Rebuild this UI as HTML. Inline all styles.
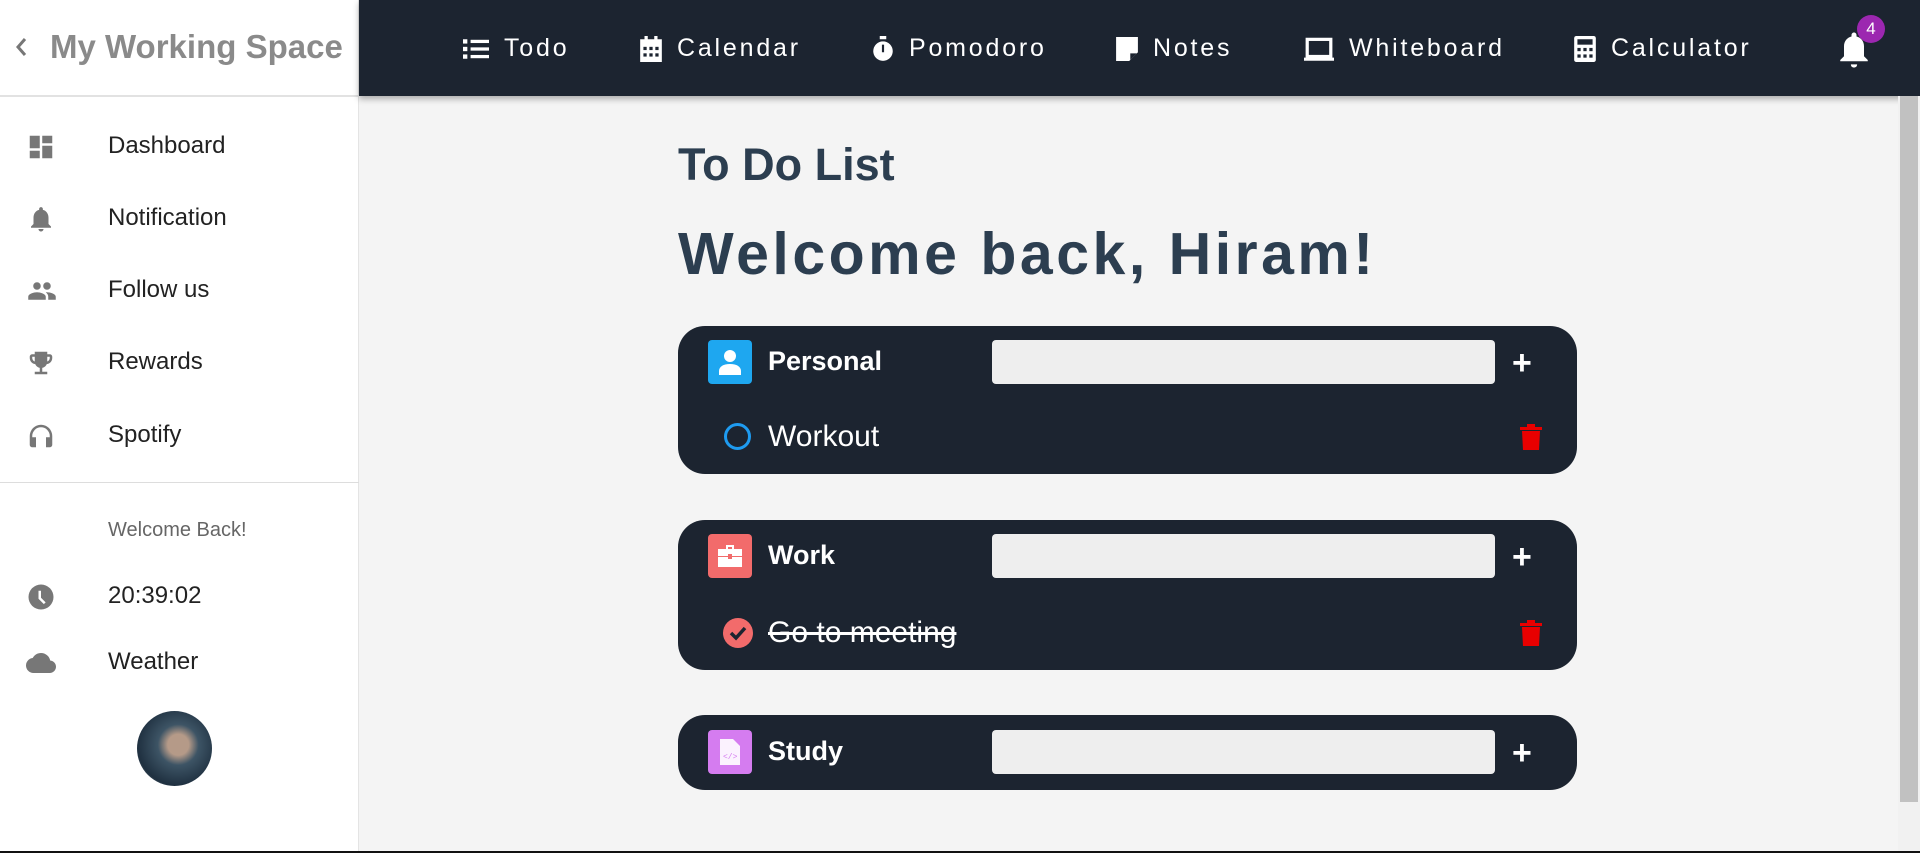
<!DOCTYPE html>
<html><head><meta charset="utf-8"><style>
*{margin:0;padding:0;box-sizing:border-box}
body{width:1920px;height:853px;overflow:hidden;background:#f4f4f4;font-family:"Liberation Sans",sans-serif;position:relative}
.side{position:absolute;left:0;top:0;width:359px;height:853px;background:#fff;border-right:1px solid #e4e4e4}
.sh{height:97px;border-bottom:2px solid #e2e2e2;position:relative}
.sh .t{position:absolute;left:50px;top:28px;font-size:33px;font-weight:bold;color:#8a8a8a}
.sh .c{position:absolute;left:14px;top:36px}
.it{position:absolute;left:0;width:359px;height:40px}
.it svg{position:absolute;left:26px;top:6px}
.it span{position:absolute;left:108px;top:6px;font-size:24px;color:#222}
.top{position:absolute;left:359px;top:0;width:1561px;height:96px;background:#1c2430;box-shadow:0 3px 6px rgba(0,0,0,.3)}
.nav{position:absolute;top:34px;color:#fff;font-size:25px;letter-spacing:2.8px;display:flex;align-items:center}
.nav svg{margin-right:15px}
h1{position:absolute;left:678px;top:139px;font-size:45px;color:#2c3e50;font-weight:bold}
h2{position:absolute;left:678px;top:220px;font-size:59px;color:#2c3e50;font-weight:900;letter-spacing:3.5px}
.card{position:absolute;left:678px;width:899px;background:#1c2430;border-radius:27px}
.ic{position:absolute;left:30px;width:44px;height:44px;border-radius:4px;display:flex;align-items:center;justify-content:center}
.lb{position:absolute;left:90px;font-size:27px;font-weight:bold;color:#fff}
.in{position:absolute;left:314px;width:503px;height:44px;background:#eeeeee;border-radius:4px}
.pl{position:absolute;left:834px;color:#fff;font-size:34px;font-weight:bold}
.row{position:absolute;left:90px;font-size:30px;color:#fff}
.scroll{position:absolute;left:1898px;top:96px;width:22px;height:757px;background:#f1f1f1}
.scroll div{position:absolute;left:2px;top:0;width:18px;height:706px;background:#c1c1c1}
</style></head><body>
<div class="side">
 <div class="sh"><svg class="c" width="14" height="22" viewBox="0 0 14 22"><path d="M11 3L4 11l7 8" stroke="#777" stroke-width="3" fill="none"/></svg><div class="t">My Working Space</div></div>
 <div class="it" style="top:126px"><svg width="30" height="30" viewBox="0 0 24 24" fill="#777"><path d="M3 13h8V3H3zm0 8h8v-6H3zm10 0h8V11h-8zm0-18v6h8V3z"/></svg><span>Dashboard</span></div>
 <div class="it" style="top:198px"><svg width="30" height="30" viewBox="0 0 24 24" fill="#777"><path d="M12 22c1.1 0 2-.9 2-2h-4c0 1.1.9 2 2 2zm6-6v-5c0-3.07-1.640-5.64-4.5-6.32V4c0-.83-.67-1.5-1.5-1.5s-1.5.67-1.5 1.5v.68C7.63 5.36 6 7.920 6 11v5l-2 2v1h16v-1z"/></svg><span>Notification</span></div>
 <div class="it" style="top:270px"><svg width="32" height="30" viewBox="0 0 24 24" fill="#777"><path d="M16 11c1.66 0 2.99-1.34 2.99-3S17.66 5 16 5s-3 1.34-3 3 1.34 3 3 3zm-8 0c1.66 0 2.99-1.34 2.99-3S9.66 5 8 5 5 6.34 5 8s1.34 3 3 3zm0 2c-2.33 0-7 1.17-7 3.5V19h14v-2.5C15 14.17 10.33 13 8 13zm8 0c-.29 0-.62.02-.97.05 1.16.84 1.97 1.97 1.97 3.45V19h6v-2.5c0-2.33-4.67-3.5-7-3.5z"/></svg><span>Follow us</span></div>
 <div class="it" style="top:342px"><svg width="30" height="30" viewBox="0 0 24 24" fill="#777"><path d="M19 5h-2V3H7v2H5c-1.1 0-2 .9-2 2v1c0 2.55 1.92 4.63 4.39 4.94A5.01 5.01 0 0011 15.9V19H7v2h10v-2h-4v-3.1a5.01 5.01 0 003.61-2.96C19.08 12.63 21 10.55 21 8V7c0-1.1-.9-2-2-2zM5 8V7h2v3.82C5.84 10.4 5 9.3 5 8zm14 0c0 1.3-.84 2.4-2 2.82V7h2z"/></svg><span>Rewards</span></div>
 <div class="it" style="top:415px"><svg width="30" height="30" viewBox="0 0 24 24" fill="#777"><path d="M12 3a9 9 0 00-9 9v7c0 1.1.9 2 2 2h3v-8H5v-1a7 7 0 0114 0v1h-3v8h3c1.1 0 2-.9 2-2v-7a9 9 0 00-9-9z"/></svg><span>Spotify</span></div>
 <div style="position:absolute;left:0;top:482px;width:359px;height:1px;background:#ddd"></div>
 <div style="position:absolute;left:108px;top:519px;font-size:20px;color:#666">Welcome Back!</div>
 <div class="it" style="top:576px"><svg width="30" height="30" viewBox="0 0 24 24" fill="#777"><circle cx="12" cy="12" r="10"/><path d="M11 7v6l4 4" stroke="#fff" stroke-width="2" fill="none"/></svg><span>20:39:02</span></div>
 <div class="it" style="top:642px"><svg width="38" height="30" viewBox="0 0 24 24" fill="#777" style="left:22px"><path d="M19.35 10.04A7.49 7.49 0 0012 4C9.11 4 6.6 5.64 5.35 8.04A5.994 5.994 0 000 14c0 3.31 2.69 6 6 6h13c2.76 0 5-2.24 5-5 0-2.64-2.05-4.78-4.65-4.96z"/></svg><span>Weather</span></div>
 <div style="position:absolute;left:137px;top:711px;width:75px;height:75px;border-radius:50%;background:radial-gradient(circle at 55% 45%,#b59a88 0 18%,#3d5465 35%,#1f3040 70%,#90a4ae 100%)"></div>
</div>
<div class="top">
 <div class="nav" style="left:104px"><svg width="26" height="24" viewBox="0 0 24 22" fill="#fff"><rect x="0" y="2" width="4" height="4"/><rect x="0" y="9" width="4" height="4"/><rect x="0" y="16" width="4" height="4"/><rect x="7" y="2.5" width="17" height="3"/><rect x="7" y="9.5" width="17" height="3"/><rect x="7" y="16.5" width="17" height="3"/></svg>Todo</div>
 <div class="nav" style="left:281px"><svg width="22" height="26" viewBox="0 0 20 24" fill="#fff"><rect x="4" y="0" width="3" height="4"/><rect x="13" y="0" width="3" height="4"/><path d="M0 3h20v21H0z"/><g fill="#1c2430"><rect x="3" y="10" width="3" height="3"/><rect x="8.5" y="10" width="3" height="3"/><rect x="14" y="10" width="3" height="3"/><rect x="3" y="16" width="3" height="3"/><rect x="8.5" y="16" width="3" height="3"/><rect x="14" y="16" width="3" height="3"/></g></svg>Calendar</div>
 <div class="nav" style="left:513px"><svg width="22" height="26" viewBox="0 0 20 24" fill="#fff"><rect x="7" y="0" width="6" height="3"/><circle cx="10" cy="14" r="9"/><rect x="9" y="8" width="2" height="7" fill="#1c2430"/></svg>Pomodoro</div>
 <div class="nav" style="left:757px"><svg width="22" height="24" viewBox="0 0 20 22" fill="#fff"><path d="M0 0h20v14l-8 8H0z"/><path d="M13 21v-6h6z" fill="#1c2430"/></svg>Notes</div>
 <div class="nav" style="left:945px"><svg width="30" height="24" viewBox="0 0 28 22" fill="none" stroke="#fff" stroke-width="3"><rect x="3" y="2" width="22" height="16"/><path d="M0 20.5h28"/></svg>Whiteboard</div>
 <div class="nav" style="left:1215px"><svg width="22" height="26" viewBox="0 0 20 24" fill="#fff"><rect width="20" height="24" rx="2"/><rect x="3" y="3" width="14" height="5" fill="#1c2430"/><g fill="#1c2430"><rect x="3" y="11" width="3" height="3"/><rect x="8.5" y="11" width="3" height="3"/><rect x="14" y="11" width="3" height="3"/><rect x="3" y="17" width="3" height="3"/><rect x="8.5" y="17" width="3" height="3"/><rect x="14" y="17" width="3" height="3"/></g></svg>Calculator</div>
 <svg style="position:absolute;left:1480px;top:32px" width="30" height="36" viewBox="0 0 24 28" fill="#fff"><path d="M12 28c1.6 0 2.5-1 2.5-2.5h-5C9.5 27 10.4 28 12 28zM20 19v-8c0-4-2.5-7-6-7.8V2a2 2 0 00-4 0v1.2C6.5 4 4 7 4 11v8l-3 3v1h22v-1z"/></svg>
 <div style="position:absolute;left:1498px;top:15px;width:28px;height:28px;border-radius:50%;background:#9c27b0;color:#fff;font-size:17px;text-align:center;line-height:28px">4</div>
</div>
<div class="scroll"><div></div></div>
<h1>To Do List</h1>
<h2>Welcome back, Hiram!</h2>

<div class="card" style="top:326px;height:148px">
 <div class="ic" style="top:14px;background:#1ea7f0"><svg width="22" height="26" viewBox="0 0 22 26" fill="#fff"><circle cx="11" cy="7" r="6"/><path d="M0 26v-4c0-4 4-7 11-7s11 3 11 7v4z"/></svg></div>
 <div class="lb" style="top:20px">Personal</div>
 <div class="in" style="top:14px"></div>
 <div class="pl" style="top:18px">+</div>
 <div style="position:absolute;left:46px;top:97px;width:27px;height:27px;border-radius:50%;border:3px solid #1e9bf0"></div>
 <div class="row" style="top:94px">Workout</div>
 <svg style="position:absolute;left:842px;top:98px" width="22" height="26" viewBox="0 0 22 26" fill="#e80000"><rect x="0" y="3" width="22" height="3"/><rect x="7" y="0" width="8" height="3"/><path d="M2 7h18l-1 19H3z"/></svg>
</div>

<div class="card" style="top:520px;height:150px">
 <div class="ic" style="top:14px;background:#f26b6b"><svg width="24" height="22" viewBox="0 0 24 22" fill="#fff"><path d="M8 0h8v4h-2V2h-4v2H8z"/><rect y="4" width="24" height="7"/><rect y="12" width="24" height="10"/><rect x="10" y="9" width="4" height="5" fill="#f26b6b"/></svg></div>
 <div class="lb" style="top:20px">Work</div>
 <div class="in" style="top:14px"></div>
 <div class="pl" style="top:18px">+</div>
 <svg style="position:absolute;left:45px;top:98px" width="30" height="30" viewBox="0 0 30 30"><circle cx="15" cy="15" r="15" fill="#f26b6b"/><path d="M8 15l5 5 9-10" stroke="#1c2430" stroke-width="3.5" fill="none"/></svg>
 <div class="row" style="top:96px;text-decoration:line-through">Go to meeting</div>
 <svg style="position:absolute;left:842px;top:100px" width="22" height="26" viewBox="0 0 22 26" fill="#e80000"><rect x="0" y="3" width="22" height="3"/><rect x="7" y="0" width="8" height="3"/><path d="M2 7h18l-1 19H3z"/></svg>
</div>

<div class="card" style="top:715px;height:75px">
 <div class="ic" style="top:15px;background:#d57cf0"><svg width="20" height="26" viewBox="0 0 20 26"><path d="M0 0h13l7 7v19H0z" fill="#fff" opacity=".9"/><text x="3" y="20" font-size="8" fill="#d57cf0" font-family="Liberation Mono">&lt;/&gt;</text></svg></div>
 <div class="lb" style="top:21px">Study</div>
 <div class="in" style="top:15px"></div>
 <div class="pl" style="top:19px">+</div>
</div>
<div style="position:absolute;left:0;top:851px;width:1920px;height:2px;background:#111"></div>
</body></html>
